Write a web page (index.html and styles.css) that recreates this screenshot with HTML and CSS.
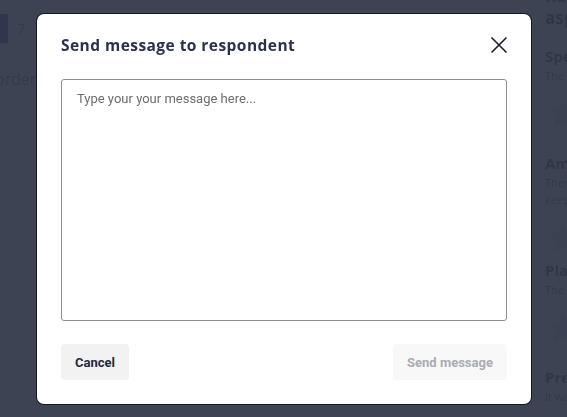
FILE: index.html
```html
<!DOCTYPE html>
<html lang="en">
<head>
<meta charset="utf-8">
<title>Send message</title>
<link rel="stylesheet" href="styles.css">
</head>
<body>
<div class="page">
  <main class="main">
    <div class="pager">
      <span class="pg active">6</span>
      <span class="pg">7</span>
    </div>
    <div class="row"><span class="sort">Sort in order</span></div>
    <div class="row tall"></div>
    <div class="row tall"></div>
  </main>
  <aside class="side">
    <h2 class="side-title">Rate these<br>aspects</h2>
    <div class="aspect">
      <h3>Speed</h3>
      <p>The speed of the service</p>
      <svg class="star" viewBox="0 0 24 24"><path d="M12 2l3 6.5 7 .8-5.2 4.8 1.4 7L12 17.6 5.8 21.1l1.4-7L2 9.3l7-.8z"/></svg>
    </div>
    <div class="aspect">
      <h3>Ambience</h3>
      <p>There was a nice ambience,<br>keep it up</p>
      <svg class="star" viewBox="0 0 24 24"><path d="M12 2l3 6.5 7 .8-5.2 4.8 1.4 7L12 17.6 5.8 21.1l1.4-7L2 9.3l7-.8z"/></svg>
    </div>
    <div class="aspect">
      <h3>Place</h3>
      <p>The place was clean</p>
      <svg class="star" viewBox="0 0 24 24"><path d="M12 2l3 6.5 7 .8-5.2 4.8 1.4 7L12 17.6 5.8 21.1l1.4-7L2 9.3l7-.8z"/></svg>
    </div>
    <div class="aspect">
      <h3>Presentation</h3>
      <p>It was well presented</p>
    </div>
  </aside>
</div>
<div class="overlay"></div>
<div class="modal" role="dialog">
  <div class="modal-head">
    <h1 class="modal-title">Send message to respondent</h1>
    <button class="close" aria-label="Close">
      <svg viewBox="0 0 18 18" width="18" height="18"><path d="M1.5 1.5l15 15M16.5 1.5l-15 15" stroke="#1b1e2b" stroke-width="1.6" fill="none"/></svg>
    </button>
  </div>
  <textarea class="msg" placeholder="Type your your message here..."></textarea>
  <div class="modal-foot">
    <button class="btn cancel">Cancel</button>
    <button class="btn send" disabled>Send message</button>
  </div>
</div>
</body>
</html>
```
FILE: styles.css
```css
* { box-sizing: border-box; }
html, body { margin: 0; padding: 0; }
body {
  width: 567px;
  height: 417px;
  overflow: hidden;
  background: #ffffff;
  font-family: "Open Sans", "Liberation Sans", sans-serif;
  color: #1f2433;
}
.page {
  display: grid;
  grid-template-columns: 545px 240px;
  width: 785px;
}
.main { padding-top: 14px; }
.pager { display: flex; height: 30px; border-bottom: 1px solid #c8ccd4; }
.pg {
  width: 26px;
  display: flex; align-items: center; justify-content: center;
  font-size: 14px; color: #6a7080;
}
.pg.active { width: 8px; background: #1a2a66; color: transparent; overflow: hidden; }
.row { height: 76px; border-bottom: 1px solid #c8ccd4; font-size: 16px; color: #555; padding-top: 24px; overflow: hidden; white-space: nowrap; }
.sort { display: inline-block; margin-left: -58px; }
.row.tall { height: 112px; }
.side { margin-top: -15px; }
.side-title { margin: 0 0 18px; font-size: 17px; font-weight: 700; line-height: 22px; color: #222; }
.aspect { height: 107px; }
.aspect h3 { margin: 0; font-size: 15px; line-height: 18px; font-weight: 700; color: #222; }
.aspect p { margin: 2px 0 0; font-size: 11px; line-height: 17px; color: #444; }
.star { width: 36px; height: 36px; margin-top: 12px; fill: #c9ccd6; }
.overlay {
  position: fixed; inset: 0;
  background: rgba(50, 55, 73, 0.94);
}
.modal {
  position: fixed;
  left: 37px; top: 14px;
  width: 494px; height: 390px;
  background: #fff;
  border-radius: 7px;
  box-shadow: 0 0 0 1px #141827;
  padding: 20px 24px 24px;
  display: flex; flex-direction: column;
}
.modal-head { display: flex; justify-content: space-between; align-items: center; height: 22px; margin-bottom: 23px; }
.modal-title {
  margin: 0;
  font-size: 15.5px; font-weight: 700; letter-spacing: 0.45px;
  color: #2a3150;
}
.close { border: 0; background: none; padding: 0; width: 18px; height: 18px; margin-right: -1px; cursor: pointer; }
.close svg { display: block; }
.msg {
  width: 446px; height: 242px;
  border: 1px solid #8e8e8e; border-radius: 3px;
  padding: 11px 15px;
  font-family: Roboto, "Liberation Sans", sans-serif;
  font-size: 13px; line-height: 16px;
  resize: none; outline: none;
}
.msg::placeholder { color: #6d6d6d; }
.modal-foot { display: flex; justify-content: space-between; margin-top: 23px; }
.btn {
  height: 36px; border: 0; border-radius: 4px;
  font-family: Roboto, "Liberation Sans", sans-serif;
  font-size: 13px; font-weight: 700;
  padding: 0; white-space: nowrap;
}
.cancel { width: 68px; background: #f2f2f2; color: #232a40; }
.send { width: 114px; background: #f8f8f8; color: #a9acb4; }
```
